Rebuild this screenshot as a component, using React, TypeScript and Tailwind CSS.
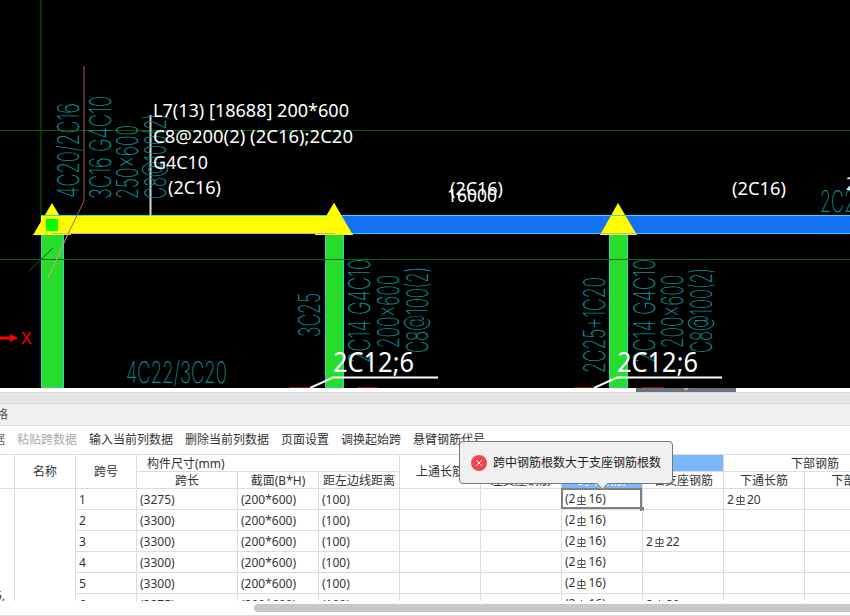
import React from "react";

const cadFont = "'Inter', sans-serif";
const labelFont = "'Noto Sans', sans-serif";

// teal annotations, [text, baseline x, start y, length]
const verticalNotes: [string, number, number, number][] = [
    ["4C20/2C16", 79, 198, 95],
    ["3C16 G4C10", 111, 199, 103],
    ["250x600", 138, 199, 74],
    ["C8@100(2)", 166, 199, 85],
    ["3C25", 320, 337, 44],
    ["2C14 G4C10", 370, 363, 104],
    ["200x600", 399, 348, 73],
    ["C8@100(2)", 428, 353, 86],
    ["2C25+1C20", 605, 373, 96],
    ["2C14 G4C10", 655, 363, 104],
    ["200x600", 683, 348, 73],
    ["C8@100(2)", 712, 353, 85],
];

// white beam labels, [text, x, baseline y, length]
const whiteLabels: [string, number, number, number][] = [
    ["L7(13) [18688] 200*600", 153, 117, 196],
    ["C8@200(2) (2C16);2C20", 153, 143, 200],
    ["G4C10", 153, 169, 55],
    ["(2C16)", 168, 194, 53],
    ["(2C16)", 450, 195, 53],
    ["16000", 447, 202, 50],
    ["(2C16)", 732, 195, 54],
];

function Support({ x }: { x: number }) {
    return <polygon points={`${x},203 ${x + 19},235 ${x - 19},235`} fill="#ffff00" />;
}

function Drawing() {
    return (
        <svg width="850" height="388" viewBox="0 0 850 388" className="block bg-black">
            <line x1="41" y1="0" x2="41" y2="230" stroke="#0a6a0a" />
            <line x1="0" y1="130.5" x2="850" y2="130.5" stroke="#0a5a0a" />

            <rect x="41.5" y="216" width="22" height="172" fill="#28dc2c" stroke="#2ad6c8" />
            <rect x="325.5" y="234" width="18" height="154" fill="#28dc2c" stroke="#2ad6c8" />
            <rect x="609.5" y="234" width="18" height="154" fill="#28dc2c" stroke="#2ad6c8" />

            <line x1="0" y1="259.5" x2="850" y2="259.5" stroke="#0a6a0a" />
            <line x1="29" y1="271" x2="53" y2="248" stroke="#0a6a0a" />

            <Support x={52} />
            <Support x={334} />
            <rect x="335" y="216" width="515" height="18" fill="#1470f5" />
            <line x1="335" y1="215.5" x2="850" y2="215.5" stroke="#35d7ee" />
            <line x1="335" y1="233.5" x2="850" y2="233.5" stroke="#35d7ee" />
            <rect x="41" y="216" width="294" height="18" fill="#ffff00" />
            <line x1="41" y1="215.5" x2="335" y2="215.5" stroke="#35d7ee" />
            <polygon points="334,203 353,235 315,235 " fill="#ffff00" />
            <polygon points="618,203 637,235 600,235" fill="#ffff00" />
            <line x1="606" y1="215.5" x2="630" y2="215.5" stroke="#35d7ee" />
            <line x1="601" y1="233.5" x2="636" y2="233.5" stroke="#b8b8a0" />
            <path d="M52 233.5H335" stroke="#b8b8a0" fill="none" />
            <rect x="46" y="219" width="12" height="12" fill="#00ff00" />

            <polyline points="84,66 84,201 68,234" fill="none" stroke="#a85a5a" />
            <line x1="68" y1="234" x2="48" y2="278" stroke="#e09a9a" />
            <line x1="150.5" y1="115" x2="150.5" y2="216" stroke="#d8d8d8" strokeWidth="2" />

            {verticalNotes.map(([text, x, y, len]) => (
                <text
                    key={`${text}-${x}`}
                    transform={`translate(${x} ${y}) rotate(-90)`}
                    fontFamily={cadFont}
                    fontWeight="200"
                    fontSize="30"
                    fill="#0a8c8e"
                    textLength={len}
                    lengthAdjust="spacingAndGlyphs"
                >
                    {text}
                </text>
            ))}
            <text x="126" y="383" fontFamily={cadFont} fontWeight="200" fontSize="30" fill="#0a8c8e" textLength="101" lengthAdjust="spacingAndGlyphs">
                4C22/3C20
            </text>
            <text x="820" y="212" fontFamily={cadFont} fontWeight="200" fontSize="30" fill="#0a8c8e" textLength="46" lengthAdjust="spacingAndGlyphs">
                2C20
            </text>
            <text x="846" y="190" fontFamily={labelFont} fontSize="18" fill="#ffffff">
                2
            </text>

            {whiteLabels.map(([text, x, y, len]) => (
                <text
                    key={`${text}-${x}`}
                    x={x}
                    y={y}
                    fontFamily={labelFont}
                    fontSize="18"
                    fill="#ffffff"
                    textLength={len}
                    lengthAdjust="spacingAndGlyphs"
                >
                    {text}
                </text>
            ))}

            <text x="333" y="372" fontFamily={labelFont} fontSize="27" fill="#ffffff" textLength="81" lengthAdjust="spacingAndGlyphs">
                2C12;6
            </text>
            <polyline points="438,377.5 333,377.5 310,388" fill="none" stroke="#ffffff" strokeWidth="2" />
            <text x="617" y="372" fontFamily={labelFont} fontSize="27" fill="#ffffff" textLength="81" lengthAdjust="spacingAndGlyphs">
                2C12;6
            </text>
            <polyline points="722,377.5 617,377.5 594,388" fill="none" stroke="#ffffff" strokeWidth="2" />

            <rect x="289" y="387" width="21" height="1" fill="#8a1010" />
            <rect x="357" y="387" width="21" height="1" fill="#8a1010" />
            <rect x="574" y="387" width="20" height="1" fill="#8a1010" />
            <rect x="642" y="387" width="22" height="1" fill="#8a1010" />

            <path d="M0 336.5H10V334L18 338L10 342V339.5H0Z" fill="#ff0000" />
            <text x="21" y="344" fontFamily="'Liberation Sans', sans-serif" fontSize="16" fill="#ff0000">
                X
            </text>
        </svg>
    );
}

function RebarSymbol() {
    return (
        <svg width="13" height="11" viewBox="0 0 13 11" className="inline-block">
            <path d="M3 2.5H10V6.5H3ZM6.5 0V9.5M2 9.5H11" fill="none" stroke="#555" />
        </svg>
    );
}

function Rebar({ text }: { text: string }) {
    const [lead, tail] = text.split("|");
    return (
        <span className="whitespace-nowrap">
            {lead}
            <RebarSymbol />
            {tail}
        </span>
    );
}

const cellLine = "border-r border-b border-[#dcdcdc]";
const headCell = `${cellLine} flex items-center justify-center pt-px whitespace-nowrap overflow-hidden`;
const bodyCell = `${cellLine} flex items-center pl-[3px] pt-[2px] whitespace-nowrap overflow-hidden`;

const rows = [
    { no: 1, len: "(3275)", mid: "(2|16)", right: "", bottom: "2|20" },
    { no: 2, len: "(3300)", mid: "(2|16)", right: "", bottom: "" },
    { no: 3, len: "(3300)", mid: "(2|16)", right: "2|22", bottom: "" },
    { no: 4, len: "(3300)", mid: "(2|16)", right: "", bottom: "" },
    { no: 5, len: "(3300)", mid: "(2|16)", right: "", bottom: "" },
    { no: 6, len: "(3275)", mid: "(2|16)", right: "2|20", bottom: "" },
];

function Table() {
    return (
        <div className="h-[146px] overflow-hidden bg-white">
            <div className="grid w-[907px] grid-cols-[15px_61px_61px_101px_81px_81px_81px_81px_81px_81px_81px_102px] grid-rows-[17px_17px_repeat(6,21px)]">
                <div className={`${headCell} row-span-2`} />
                <div className={`${headCell} row-span-2`}>名称</div>
                <div className={`${headCell} row-span-2`}>跨号</div>
                <div className={`${cellLine} col-span-3 flex items-center pt-px pl-[10px]`}>构件尺寸(mm)</div>
                <div className={`${headCell} row-span-2`}>上通长筋</div>
                <div className={`${headCell} col-span-3 bg-[#7ab8fb] text-white`}>上部钢筋</div>
                <div className={`${headCell} col-span-2`}>下部钢筋</div>

                <div className={headCell}>跨长</div>
                <div className={headCell}>截面(B*H)</div>
                <div className={headCell}>距左边线距离</div>
                <div className={headCell}>左支座钢筋</div>
                <div className={`${headCell} bg-[#7ab8fb] text-white`}>跨中钢筋</div>
                <div className={headCell}>右支座钢筋</div>
                <div className={headCell}>下通长筋</div>
                <div className={headCell}>下部钢筋</div>

                <div className={`${cellLine} row-span-6 flex items-end justify-end overflow-hidden pr-[9px] pb-[12px]`}>5,</div>
                <div className={`${cellLine} row-span-6`} />
                {rows.map((row) => (
                    <React.Fragment key={row.no}>
                        <div className={bodyCell}>{row.no}</div>
                        <div className={bodyCell}>{row.len}</div>
                        <div className={bodyCell}>(200*600)</div>
                        <div className={bodyCell}>(100)</div>
                        <div className={bodyCell} />
                        <div className={bodyCell} />
                        <div className={`${cellLine} relative flex items-center pt-px pl-[3px]`}>
                            <Rebar text={row.mid} />
                            {row.no === 1 && (
                                <div className="absolute -top-px -left-px right-0 bottom-0 border-2 border-[#808080]">
                                    <div className="absolute -right-[4px] -bottom-[4px] h-[4px] w-[4px] bg-[#808080]" />
                                </div>
                            )}
                        </div>
                        <div className={bodyCell}>{row.right && <Rebar text={row.right} />}</div>
                        <div className={bodyCell}>{row.bottom && <Rebar text={row.bottom} />}</div>
                        <div className={bodyCell} />
                    </React.Fragment>
                ))}
            </div>
        </div>
    );
}

function ErrorTip() {
    return (
        <div className="absolute top-[441px] left-[459px] flex h-[43px] w-[214px] items-center gap-[6px] rounded-[4px] border border-[#777] bg-[#f0f0f0] pl-[11px]">
            <svg width="16" height="16" viewBox="0 0 16 16" className="shrink-0">
                <circle cx="8" cy="8" r="8" fill="#f4454f" />
                <path d="M5 5L11 11M11 5L5 11" stroke="#fff" strokeWidth="1" />
            </svg>
            <span className="text-[12px] whitespace-nowrap text-[#222]">跨中钢筋根数大于支座钢筋根数</span>
            <div className="absolute -bottom-[5px] left-[138px] h-[9px] w-[9px] rotate-45 border-r border-b border-[#777] bg-[#f0f0f0]" />
        </div>
    );
}

export default function App() {
    return (
        <div className="relative h-[616px] w-[850px] overflow-hidden bg-white font-['Noto_Sans','Noto_Sans_CJK_SC',sans-serif] text-[12px] leading-none text-[#333]">
            <Drawing />

            <div className="flex h-[4px] justify-start bg-white pl-[636px]">
                <div className="flex h-[4px] w-[100px] justify-center bg-[#6b7280]">
                    <div className="h-0 w-0 border-x-[3px] border-t-[3px] border-x-transparent border-t-[#b0b4ba]" />
                </div>
            </div>
            <div className="h-[12px] border-y border-[#d8d8d8] bg-[#e6e6e6]" />

            <div className="flex h-[22px] items-center border-b border-[#dcdcdc] bg-[#f0f0f0] text-[#555]">
                <span className="-ml-[4px]">格</span>
            </div>

            <div className="flex h-[29px] items-center gap-[12px] border-b border-[#dcdcdc] bg-white whitespace-nowrap">
                <span className="-ml-[7px] text-[#666]">据</span>
                <span className="text-[#aaa]">粘贴跨数据</span>
                <span>输入当前列数据</span>
                <span>删除当前列数据</span>
                <span>页面设置</span>
                <span>调换起始跨</span>
                <span>悬臂钢筋代号</span>
            </div>

            <Table />

            <div className="flex h-[15px] items-start justify-end border-b border-[#dcdcdc] bg-white pt-[3px]">
                <div className="h-[8px] w-[596px] rounded-l-[4px] bg-[#c8c8c8]" />
            </div>

            <ErrorTip />
        </div>
    );
}
